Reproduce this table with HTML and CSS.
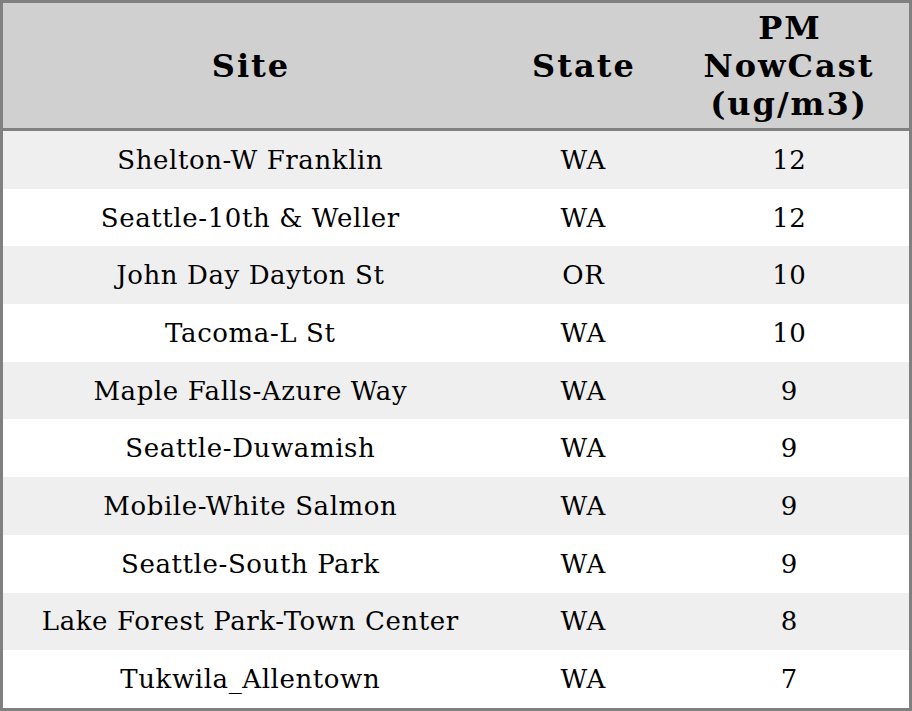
FILE: index.html
```html
<!DOCTYPE html>
<html>
<head>
<meta charset="utf-8">
<link rel="stylesheet" href="styles.css">
</head>
<body>
<table class="aq">
  <colgroup>
    <col class="c-site">
    <col class="c-state">
    <col class="c-pm">
  </colgroup>
  <thead>
    <tr><th>Site</th><th>State</th><th>PM<br>NowCast<br>(ug/m3)</th></tr>
  </thead>
  <tbody>
    <tr><td>Shelton-W Franklin</td><td>WA</td><td>12</td></tr>
    <tr><td>Seattle-10th &amp; Weller</td><td>WA</td><td>12</td></tr>
    <tr><td>John Day Dayton St</td><td>OR</td><td>10</td></tr>
    <tr><td>Tacoma-L St</td><td>WA</td><td>10</td></tr>
    <tr><td>Maple Falls-Azure Way</td><td>WA</td><td>9</td></tr>
    <tr><td>Seattle-Duwamish</td><td>WA</td><td>9</td></tr>
    <tr><td>Mobile-White Salmon</td><td>WA</td><td>9</td></tr>
    <tr><td>Seattle-South Park</td><td>WA</td><td>9</td></tr>
    <tr><td>Lake Forest Park-Town Center</td><td>WA</td><td>8</td></tr>
    <tr><td>Tukwila_Allentown</td><td>WA</td><td>7</td></tr>
  </tbody>
</table>
</body>
</html>
```
FILE: styles.css
```css
html, body {
  margin: 0;
  padding: 0;
  background: #ffffff;
}
.aq {
  width: 912px;
  border-collapse: separate;
  border-spacing: 0;
  border: 3px solid #808080;
  table-layout: fixed;
  font-family: "DejaVu Serif", serif;
  color: #000;
}
.c-site { width: 494px; }
.c-state { width: 172px; }
.c-pm { width: 240px; }
.aq th {
  background: #d0d0d0;
  font-size: 32px;
  font-weight: bold;
  letter-spacing: 2px;
  text-indent: 2px;
  line-height: 38px;
  height: 125px;
  padding: 0;
  border-bottom: 3px solid #808080;
  text-align: center;
  vertical-align: middle;
}
.aq td {
  font-size: 26px;
  letter-spacing: 0.6px;
  text-indent: 0.6px;
  line-height: 30px;
  height: 57.7px;
  padding: 0;
  text-align: center;
  vertical-align: middle;
  box-sizing: border-box;
}
.aq tbody tr:nth-child(odd) td {
  background: #efefef;
}
```
